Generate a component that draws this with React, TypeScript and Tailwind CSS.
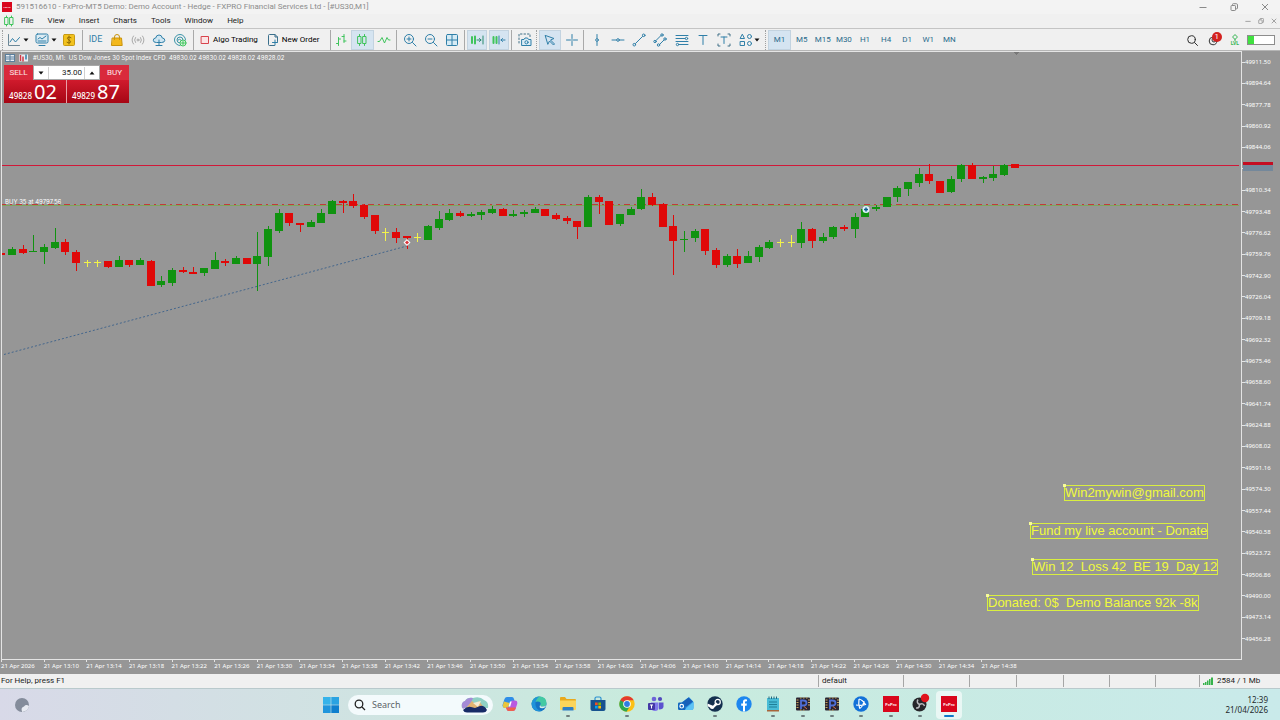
import { ReactNode } from 'react';
import { clsx } from 'clsx';

type Tone = 'g' | 'r' | 'y';
// tone, body top, body bottom, high, low
type Candle = [Tone, number, number, number, number];

const CANDLES: Candle[] = [
  ['r', 253, 255, 253, 255],
  ['g', 249, 255, 247, 255],
  ['r', 249, 253, 245, 254],
  ['g', 251, 252, 235, 252],
  ['g', 247, 252, 244, 264],
  ['g', 242, 248, 228, 249],
  ['r', 242, 252, 239, 255],
  ['r', 252, 263, 250, 271],
  ['y', 262, 263, 260, 267],
  ['y', 262, 263, 260, 267],
  ['r', 261, 267, 261, 268],
  ['g', 260, 267, 256, 267],
  ['r', 260, 265, 260, 267],
  ['g', 260, 265, 258, 265],
  ['r', 261, 286, 260, 286],
  ['g', 281, 285, 276, 287],
  ['g', 270, 283, 268, 286],
  ['r', 270, 272, 267, 273],
  ['r', 272, 274, 267, 274],
  ['g', 268, 273, 268, 276],
  ['g', 260, 269, 252, 269],
  ['r', 261, 263, 259, 266],
  ['g', 258, 264, 256, 264],
  ['r', 258, 264, 258, 264],
  ['g', 256, 264, 232, 291],
  ['g', 229, 257, 226, 266],
  ['g', 213, 231, 209, 233],
  ['r', 213, 223, 213, 226],
  ['r', 223, 225, 223, 232],
  ['g', 222, 227, 220, 227],
  ['g', 213, 223, 209, 223],
  ['g', 201, 214, 200, 214],
  ['r', 201, 203, 200, 213],
  ['r', 201, 206, 194, 208],
  ['r', 205, 217, 204, 219],
  ['r', 215, 231, 215, 234],
  ['y', 232, 233, 228, 241],
  ['r', 232, 238, 228, 243],
  ['r', 236, 238, 236, 249],
  ['y', 237, 238, 233, 242],
  ['g', 226, 240, 225, 240],
  ['g', 219, 228, 211, 230],
  ['g', 213, 220, 209, 221],
  ['r', 213, 216, 211, 217],
  ['g', 214, 216, 212, 217],
  ['g', 212, 215, 210, 220],
  ['g', 209, 213, 206, 214],
  ['r', 209, 216, 208, 216],
  ['g', 214, 216, 210, 217],
  ['g', 212, 214, 210, 217],
  ['g', 209, 213, 207, 213],
  ['r', 209, 216, 209, 216],
  ['r', 215, 219, 213, 220],
  ['r', 218, 221, 216, 224],
  ['r', 221, 227, 221, 239],
  ['g', 197, 227, 195, 227],
  ['r', 197, 202, 195, 214],
  ['r', 201, 225, 201, 225],
  ['g', 214, 224, 214, 226],
  ['g', 209, 215, 207, 215],
  ['g', 197, 209, 189, 210],
  ['r', 197, 205, 193, 206],
  ['r', 204, 227, 203, 227],
  ['r', 226, 241, 215, 275],
  ['g', 239, 240, 231, 252],
  ['g', 231, 238, 229, 242],
  ['r', 229, 251, 229, 255],
  ['r', 250, 265, 248, 268],
  ['g', 256, 265, 254, 267],
  ['r', 256, 264, 249, 268],
  ['g', 256, 263, 251, 263],
  ['g', 247, 257, 245, 262],
  ['g', 242, 248, 240, 249],
  ['y', 242, 243, 239, 247],
  ['y', 242, 243, 235, 247],
  ['g', 229, 243, 222, 248],
  ['r', 229, 241, 228, 248],
  ['g', 237, 241, 233, 243],
  ['g', 227, 237, 226, 239],
  ['r', 227, 229, 225, 231],
  ['g', 217, 229, 213, 238],
  ['g', 209, 217, 208, 217],
  ['g', 207, 209, 205, 211],
  ['g', 197, 207, 197, 207],
  ['g', 188, 197, 186, 202],
  ['g', 182, 189, 182, 196],
  ['g', 174, 183, 168, 187],
  ['r', 174, 181, 164, 184],
  ['r', 181, 193, 181, 193],
  ['g', 179, 192, 176, 193],
  ['g', 165, 179, 164, 182],
  ['r', 165, 179, 163, 179],
  ['g', 177, 179, 176, 183],
  ['g', 174, 178, 166, 181],
  ['g', 165, 175, 164, 176],
  ['r', 164, 168, 164, 168],
];

const TONES: Record<Tone, string> = { g: '#109310', r: '#e00808', y: '#f2f24a' };

const MENU = ['File', 'View', 'Insert', 'Charts', 'Tools', 'Window', 'Help'];
const TIMEFRAMES = ['M1', 'M5', 'M15', 'M30', 'H1', 'H4', 'D1', 'W1', 'MN'];

const PRICES = Array.from({ length: 28 }, (_, i) => (49911.5 - 16.86 * i).toFixed(2));

const TIMES = Array.from({ length: 24 }, (_, i) => {
  if (i === 0) return '21 Apr 2026';
  const m = 66 + 4 * i;
  return `21 Apr ${12 + Math.floor(m / 60)}:${String(m % 60).padStart(2, '0')}`;
});

const NOTES = [
  { text: 'Win2mywin@gmail.com', place: 'left-[1062px] top-[433px]' },
  { text: 'Fund my live account - Donate', place: 'left-[1028px] top-[471px]' },
  { text: 'Win 12  Loss 42  BE 19  Day 12', place: 'left-[1030px] top-[507px]' },
  { text: 'Donated: 0$  Demo Balance 92k -8k', place: 'left-[985px] top-[543px]' },
];

const BLUE = '#2f7fa8';
const GREEN = '#3fc45c';

function Icon({ children, color = BLUE }: { children: ReactNode; color?: string }) {
  return (
    <svg
      viewBox="0 0 14 14"
      className="size-3.5 shrink-0"
      fill="none"
      stroke={color}
      strokeWidth="1"
      strokeLinecap="round"
      strokeLinejoin="round"
    >
      {children}
    </svg>
  );
}

function Caret() {
  return (
    <svg viewBox="0 0 6 4" className="h-1 w-1.5 shrink-0">
      <path d="M.5.5h5L3 3.500Z" fill="#111" />
    </svg>
  );
}

function Tool({
  label,
  active,
  className,
  children,
}: {
  label: string;
  active?: boolean;
  className?: string;
  children: ReactNode;
}) {
  return (
    <button
      type="button"
      aria-label={label}
      className={clsx(
        'flex h-5 items-center justify-center',
        active && 'border border-[#c3d3e0] bg-[#d5e4f1]',
        className ?? 'min-w-0 flex-1'
      )}
    >
      {children}
    </button>
  );
}

function Group({
  className,
  dotted,
  children,
}: {
  className: string;
  dotted?: boolean;
  children: ReactNode;
}) {
  return (
    <div
      className={clsx(
        'flex h-5 shrink-0 items-center border-l',
        dotted ? 'border-dotted border-[#a0a0a0]' : 'border-[#a9a9a9]',
        className
      )}
    >
      {children}
    </div>
  );
}

function WindowButtons({ small }: { small?: boolean }) {
  return (
    <div className={clsx('flex items-center text-[#8a8a8a]', small ? 'w-[38px]' : 'w-[93px]')}>
      {['Minimize', 'Restore', 'Close'].map((name) => (
        <button
          key={name}
          type="button"
          aria-label={name}
          className="flex flex-1 items-center justify-center"
        >
          <svg
            viewBox="0 0 8 8"
            className={small ? 'size-1.5' : 'size-2'}
            fill="none"
            stroke="currentColor"
          >
            {name === 'Minimize' && <path d="M.5 4.500h7" />}
            {name === 'Restore' && (
              <path d="M1 3.200q0-.7.7-.7h3.100q.7 0 .7.700v3.600q0 .7-.7.700H1.700q-.7 0-.7-.7ZM2.500 2.500V1.500q0-.8.800-.8h3q1.200 0 1.200 1.200v3.100q0 .8-.8.800h-1" />
            )}
            {name === 'Close' && <path d="m1 1 6 6M7 1 1 7" />}
          </svg>
        </button>
      ))}
    </div>
  );
}

function FxArt() {
  return (
    <>
      <rect width="16" height="16" fill="#d9061c" />
      <text
        x="8"
        y="9.500"
        textAnchor="middle"
        fontSize="4"
        fontWeight="700"
        fontFamily="Liberation Sans, sans-serif"
        fill="#fff"
      >
        FxPro
      </text>
    </>
  );
}

function TitleBar() {
  return (
    <header className="flex h-3.5 items-center bg-[#f3f3f3] pl-0.5">
      <svg viewBox="0 0 16 16" className="size-2.5 shrink-0">
        <FxArt />
      </svg>
      <h1 className="flex-1 pl-1 text-[8px] leading-3 whitespace-nowrap text-[#8c8c8c]">
        591516610 - FxPro-MT5 Demo: Demo Account - Hedge - FXPRO Financial Services Ltd - [#US30,M1]
      </h1>
      <WindowButtons />
    </header>
  );
}

function MenuBar() {
  return (
    <nav className="flex h-[15px] items-center border-b border-[#c4c4c4] bg-[#f0f0f0] pl-0.5">
      <Icon color={GREEN}>
        <path d="M4.500 2v1.500M4.500 10.500V12M9.500 2v1.500M9.500 10.500V12M3 3.500h3v7H3ZM8 3.500h3v7H8Z" />
      </Icon>
      <div className="flex flex-1 items-center gap-[14px] pl-[5px]">
        {MENU.map((item) => (
          <button key={item} type="button" className="text-[8px] leading-3 text-[#1b1b1b]">
            {item}
          </button>
        ))}
      </div>
      <WindowButtons small />
    </nav>
  );
}

function Toolbar() {
  return (
    <div
      role="toolbar"
      aria-label="Standard"
      className="flex h-[21px] items-center bg-[#f0f0f0] pl-0.5 text-[8px]"
    >
      <Group dotted className="w-20 gap-[3px] pl-[5px]">
        <Tool label="Chart type" className="w-5 gap-0.5">
          <Icon color="#6d8796">
            <path d="M1.500 1.500v11h11" />
            <path d="m3 9 2.500-3.500L8.500 9l4-4.500" stroke={BLUE} />
          </Icon>
          <Caret />
        </Tool>
        <Tool label="Indicators" className="ml-1 w-[22px] gap-0.5">
          <Icon>
            <rect x="1" y="1" width="12" height="9" rx="1.500" fill="#dcebf3" />
            <path d="m3 6 2-1.500L7 6l4-3M3 8h8M4 12.500h6" />
          </Icon>
          <Caret />
        </Tool>
        <Tool label="Symbols" className="w-[18px]">
          <Icon color="#c79a13">
            <rect x="1.500" y="1.500" width="11" height="11" rx="1" fill="#f2c21e" />
            <path d="M9 4.700Q7 3.500 5.700 4.500T7 7t1.300 2.500T5 9.300M7 3v8" stroke="#8f6b06" />
          </Icon>
        </Tool>
      </Group>

      <Group className="w-[111px] px-0.5">
        <Tool label="MetaEditor IDE">
          <span className="text-[9px] text-[#2f7fa8]">IDE</span>
        </Tool>
        <Tool label="Market">
          <Icon color="#c9930d">
            <path d="M2.500 5h9l.7 7.500H1.800Z" fill="#f3b81c" />
            <path d="M4.500 6.500V4Q4.500 1.500 7 1.500T9.500 4v2.500" />
          </Icon>
        </Tool>
        <Tool label="Signals">
          <Icon color="#a9a9a9">
            <circle cx="7" cy="7" r="1" />
            <path d="M4.500 4.500q-2 2.500 0 5M9.500 4.500q2 2.500 0 5M2.500 3Q-.5 7 2.500 11M11.500 3q3 4 0 8" />
          </Icon>
        </Tool>
        <Tool label="Virtual hosting">
          <Icon>
            <path
              d="M4 9.500Q1.300 9.500 1.300 7.300T3.700 5Q4.200 2 7 2t3.300 3q2.500.2 2.500 2.300T10 9.500Z"
              fill="#cfe6f2"
            />
            <path d="M7 7v5.500M4 12.500h6" />
          </Icon>
        </Tool>
        <Tool label="Community">
          <Icon color="#3a93a8">
            <path d="M7 12.500A5.500 5.500 0 1 1 12.500 7M7 10A3 3 0 1 1 10 7M5 7a2 2 0 0 1 3 0" />
            <circle cx="10" cy="10" r="3" fill="#dff5e2" stroke={GREEN} />
            <path d="M8.500 10h3M10 8.500v3" stroke={GREEN} />
          </Icon>
        </Tool>
      </Group>

      <Group className="w-[137px] gap-2 pl-1">
        <Tool label="Algo Trading" className="shrink-0 gap-px whitespace-nowrap">
          <Icon color="#d8434c">
            <rect x="3.500" y="3.500" width="7" height="7" fill="#fbe4e5" />
          </Icon>
          Algo Trading
        </Tool>
        <Tool label="New Order" className="shrink-0 gap-0.5 whitespace-nowrap">
          <Icon color="#3a6f8c">
            <path d="M8.500 12.500H3.500Q2.500 12.500 2.500 11.500v-9Q2.500 1.500 3.500 1.500H9L11.500 4v4.500M9 1.500V4h2.500" />
            <path d="M6.500 9.500h5M9 7v5" stroke={BLUE} />
          </Icon>
          New Order
        </Tool>
      </Group>

      <Group className="w-[66px] pr-0.5">
        <Tool label="Bar chart">
          <Icon color={GREEN}>
            <path d="M4.500 4.500v8M4.500 10.500h-2M4.500 6h2M10 1.500v8M10 3.500H8M10 8h2" />
          </Icon>
        </Tool>
        <Tool label="Candlesticks" active>
          <Icon color={GREEN}>
            <path d="M4.500 1.500v2M4.500 10.500v2M9.500 1.500v2M9.500 10.500v2M3 3.500h3v7H3ZM8 3.500h3v7H8Z" />
          </Icon>
        </Tool>
        <Tool label="Line chart">
          <Icon color={GREEN}>
            <path d="M1 8.500h1.500L5 4.500l2.500 5.500 2.500-5.500L11.500 7H13" />
          </Icon>
        </Tool>
      </Group>

      <Group className="w-[68px] px-0.5">
        <Tool label="Zoom in">
          <Icon>
            <circle cx="6" cy="6" r="4.500" />
            <path d="m9.500 9.500 3.500 3.500M4 6h4M6 4v4" />
          </Icon>
        </Tool>
        <Tool label="Zoom out">
          <Icon>
            <circle cx="6" cy="6" r="4.500" />
            <path d="m9.500 9.500 3.500 3.500M4 6h4" />
          </Icon>
        </Tool>
        <Tool label="Tile windows">
          <Icon>
            <rect x="1.500" y="1.500" width="11" height="11" rx="1" fill="#d6ebf5" />
            <path d="M7 1.500v11M1.500 7h11" />
          </Icon>
        </Tool>
      </Group>

      <Group className="w-[47px] gap-0.5 px-0.5">
        <Tool label="Auto scroll" active>
          <Icon color={GREEN}>
            <path d="M2 4v6M5 3.500v7" strokeWidth="2" />
            <path d="M7 7h4M9.500 5.500 11 7 9.500 8.500M13 3v8" stroke="#2b8a6e" />
          </Icon>
        </Tool>
        <Tool label="Chart shift" active>
          <Icon color={GREEN}>
            <path d="M1.500 4v6M4.500 4v6" strokeWidth="2" />
            <path d="M7 3v8M13 7H9M10.500 5.500 9 7l1.500 1.500" stroke={BLUE} />
          </Icon>
        </Tool>
      </Group>

      <Group className="w-[25px] pl-0.5">
        <Tool label="Screenshot">
          <Icon>
            <path d="M1 10V1h11v3" strokeDasharray="1.500 2" stroke="#3f6f86" />
            <path d="M4 6.500h2l1-1.500h2.500l1 1.500h2.500v6H4Z" fill="#dcecf5" />
            <circle cx="8.500" cy="9.300" r="1.600" />
          </Icon>
        </Tool>
      </Group>

      <Group dotted className="w-[47px] gap-px pr-px pl-0.5">
        <Tool label="Cursor" active>
          <Icon>
            <path d="m2.500 2.500 8.500 3-3.500 1.500 4 4-1 1-4-4L5 11Z" />
          </Icon>
        </Tool>
        <Tool label="Crosshair">
          <Icon>
            <path d="M7 1.500v4M7 8.500v4M1.500 7h4M8.500 7h4M7 6.500v1" />
          </Icon>
        </Tool>
      </Group>

      <Group className="w-[182px] pl-0.5">
        <Tool label="Vertical line">
          <Icon>
            <path d="M7 1.500v4M7 8.500v4" />
            <circle cx="7" cy="7" r="1.300" />
          </Icon>
        </Tool>
        <Tool label="Horizontal line">
          <Icon>
            <path d="M1 7h4.500M8.500 7H13" />
            <circle cx="7" cy="7" r="1.300" />
          </Icon>
        </Tool>
        <Tool label="Trendline">
          <Icon>
            <path d="m3.500 10.500 7-7" />
            <circle cx="2.300" cy="11.700" r="1.300" />
            <circle cx="11.700" cy="2.300" r="1.300" />
          </Icon>
        </Tool>
        <Tool label="Channel">
          <Icon>
            <path d="m3 7.500 5-5M6.500 11.500l4.500-4.500" />
            <circle cx="2" cy="8.500" r="1.200" />
            <circle cx="9" cy="2" r="1.200" />
            <circle cx="5.500" cy="12" r="1.200" />
            <circle cx="12" cy="6" r="1.200" />
          </Icon>
        </Tool>
        <Tool label="Fibonacci">
          <Icon>
            <path d="M1 2.500h12M1 5.500h9M1 8.500h12M4 11.500h9" />
            <circle cx="11.500" cy="5.500" r="1.200" />
            <circle cx="2.500" cy="11.500" r="1.200" />
          </Icon>
        </Tool>
        <Tool label="Text">
          <Icon>
            <path d="M3 2.500h8M7 2.500v9" />
          </Icon>
        </Tool>
        <Tool label="Text label">
          <Icon>
            <path d="M4 4h6M7 4v6.500" />
            <path d="M1 3V1h2M11 1h2v2M13 11v2h-2M3 13H1v-2" stroke="#3f6f86" />
          </Icon>
        </Tool>
        <Tool label="Objects" className="w-[30px] gap-px">
          <Icon>
            <path d="m3.500 1.500 2 4h-4Z" />
            <circle cx="10.500" cy="3.500" r="2" />
            <rect x="1.500" y="8.500" width="4" height="4" />
            <circle cx="10.500" cy="10.500" r="2" />
          </Icon>
          <Caret />
        </Tool>
      </Group>

      <Group dotted className="w-[195px] pl-0.5 text-[#2a6b8c]">
        {TIMEFRAMES.map((frame) => (
          <Tool key={frame} label={frame} active={frame === 'M1'}>
            {frame}
          </Tool>
        ))}
      </Group>

      <div className="flex flex-1 items-center justify-end gap-2 pr-[5px]">
        <Tool label="Search" className="w-3.5">
          <Icon color="#2d2d2d">
            <circle cx="6.500" cy="6.500" r="3.800" />
            <path d="m9.500 9.500 3 3" />
          </Icon>
        </Tool>
        <button
          type="button"
          aria-label="Notifications"
          className="relative flex h-5 w-4 items-center"
        >
          <Icon color="#333">
            <circle cx="6" cy="8" r="3.800" />
            <circle cx="7" cy="7" r="2" />
          </Icon>
          <span className="absolute top-0.5 left-[5px] flex size-[10px] items-center justify-center rounded-full bg-[#d3211f] text-[8px] text-white">
            1
          </span>
        </button>
        <button
          type="button"
          className="flex flex-col items-center text-[5px] leading-[5px] font-bold text-[#35b552]"
        >
          <svg viewBox="0 0 8 7" className="h-[7px] w-2" fill="none" stroke="currentColor">
            <path d="M4 .6 6.500 3 4 5.400 1.500 3ZM4 5v2" />
          </svg>
          LVL
        </button>
        <div className="flex h-2.5 w-7 border border-[#8d8d8d] bg-white">
          <div className="w-1.5 bg-[#3fe03f]" />
        </div>
      </div>
    </div>
  );
}

function TradePanel() {
  return (
    <div className="absolute top-[13px] left-0.5 w-[125px]">
      <div className="flex h-[15px] text-[8px]">
        <button type="button" className="w-[29px] bg-[#d92a3c] text-white/90">
          SELL
        </button>
        <div className="flex flex-1 items-center justify-between border border-[#a8a8a8] bg-white">
          <button type="button" aria-label="Decrease volume" className="px-1">
            <Caret />
          </button>
          <input
            aria-label="Volume"
            defaultValue="35.00"
            className="h-3 w-0 min-w-0 flex-1 border-x border-[#d0d0d0] pr-0.5 text-right text-[#222]"
          />
          <button type="button" aria-label="Increase volume" className="rotate-180 px-1">
            <Caret />
          </button>
        </div>
        <button type="button" className="w-[29px] bg-[#d92a3c] text-white/90">
          BUY
        </button>
      </div>
      <div className="flex h-[23px] gap-px bg-[#e9a0a7] font-['Noto_Sans',sans-serif]">
        {[
          ['49828', '02'],
          ['49829', '87'],
        ].map(([base, pips]) => (
          <button
            key={base}
            type="button"
            className="flex flex-1 items-baseline justify-center gap-0.5 bg-linear-to-b from-[#d01a2c] to-[#a60614] pr-1 text-white"
          >
            <span className="text-[8px] font-medium">{base}</span>
            <span className="text-[20px] leading-[23px]">{pips}</span>
          </button>
        ))}
      </div>
    </div>
  );
}

function Plot() {
  return (
    <svg className="absolute inset-0 size-full" shapeRendering="crispEdges">
      <g transform="translate(-2 -52)" strokeWidth="1">
        <path d="M1013 52h7l-3.500 3Z" fill="#777" />
        <line x1="0" x2="100%" y1="165.500" y2="165.500" stroke="#d01838" />
        <line x1="0" x2="100%" y1="205.500" y2="205.500" stroke="#7fa65c" />
        <line x1="0" x2="100%" y1="204.500" y2="204.500" stroke="#c23a3a" strokeDasharray="6 4 2 4" />
        <line
          x1="4"
          y1="354.500"
          x2="407"
          y2="246"
          stroke="#44668c"
          strokeDasharray="2 2"
          shapeRendering="auto"
        />
        {CANDLES.map(([tone, top, bottom, high, low], i) => {
          const x = Math.round(1.2 + 10.667 * i);
          return (
            <g key={i} fill={TONES[tone]} stroke="none">
              <rect x={x} y={high} width="1" height={low - high} />
              <rect
                x={x - (tone === 'y' ? 3 : 4)}
                y={top}
                width={tone === 'y' ? 7 : 8}
                height={bottom - top}
              />
            </g>
          );
        })}
        <g shapeRendering="auto">
          <path d="m407 239 3.500 3.500-3.500 3.500-3.500-3.500Z" fill="#fff" />
          <path d="m407 240.500 2 2-2 2-2-2Z" fill="#d8343a" />
          <circle cx="866" cy="209.500" r="3.500" fill="#dff3fb" />
          <path d="M864 209.500h4M866 207.500v4" stroke="#0f5f8c" strokeWidth="1.500" />
        </g>
      </g>
    </svg>
  );
}

function Chart() {
  return (
    <main className="flex flex-1 flex-col border-t border-[#b5b5b5] bg-[#969696] text-white">
      <div className="flex flex-1">
        <section className="relative ml-px flex-1 overflow-hidden border border-[#e4e4e4]">
          <Plot />
          <div className="absolute top-px left-[3px] flex items-center gap-1 font-[Inter,sans-serif] text-[6px] leading-[10px] whitespace-pre">
            <svg viewBox="0 0 24 8" className="h-2 w-6">
              <rect x=".500" y=".500" width="9" height="7" fill="#e8eef4" stroke="#5b7f9c" />
              <path d="M1 3h8M1 5h8M5 1v6" stroke="#5b7f9c" />
              <rect x="14" y=".500" width="9" height="7" fill="#e8eef4" />
              <path d="M15.500 1v6M18 2.500v5" stroke="#d13a45" strokeWidth="1.500" />
              <path d="M21 .500v5" stroke="#2f7fa8" strokeWidth="1.500" />
            </svg>
            <span>
              #US30, M1:  US Dow Jones 30 Spot Index CFD  49830.02 49830.02 49828.02 49828.02
            </span>
          </div>
          <TradePanel />
          <span className="absolute top-[145px] left-[3px] font-[Inter,sans-serif] text-[6px] leading-[10px]">
            BUY 35 at 49797.56
          </span>
          {NOTES.map(({ text, place }) => (
            <div
              key={text}
              className={clsx(
                'absolute border border-[#d9ee3f] font-[Liberation_Sans,Arial,sans-serif] text-[13px] leading-[14px] whitespace-pre text-[#f0fa3c]',
                place
              )}
            >
              <i className="absolute -top-0.5 -left-0.5 size-[3px] bg-[#f6fb9a]" />
              {text}
            </div>
          ))}
        </section>
        <aside className="relative flex w-[38px] flex-col justify-between pt-1.5 pb-4 font-['Noto_Sans',sans-serif] text-[6px] leading-[10px]">
          {PRICES.map((price) => (
            <span key={price} className="flex items-center">
              <i className="h-px w-[3px] bg-[#e4e4e4]" />
              {price}
            </span>
          ))}
          <div className="absolute top-[111px] left-px h-[9px] w-[30px] border-t-[3px] border-[#c40d22] bg-[#74889b]" />
        </aside>
      </div>
      <ol className="grid h-[14px] w-[1024px] grid-cols-24 pl-px font-['Noto_Sans',sans-serif] text-[6px] leading-[12px] whitespace-nowrap">
        {TIMES.map((time) => (
          <li key={time} className="relative">
            <i className="absolute -top-px left-0 h-[3px] w-px bg-[#e4e4e4]" />
            {time}
          </li>
        ))}
      </ol>
    </main>
  );
}

function StatusBar() {
  const cell = 'border-l border-[#a6a6a6]';
  return (
    <footer className="flex h-3.5 items-stretch bg-[#f0f0f0] py-px text-[8px] leading-3 text-[#1b1b1b]">
      <span className="flex-1 pl-px">For Help, press F1</span>
      <span className={clsx(cell, 'w-[85px] pl-[3px]')}>default</span>
      <span className={clsx(cell, 'w-[66px]')} />
      <span className={clsx(cell, 'w-[47px]')} />
      <span className={clsx(cell, 'w-[47px]')} />
      <span className={clsx(cell, 'w-[46px]')} />
      <span className={clsx(cell, 'w-[46px]')} />
      <span className={clsx(cell, 'w-[44px]')} />
      <span className={clsx(cell, 'flex w-[81px] items-center gap-1 pl-[3px]')}>
        <svg viewBox="0 0 10 8" className="h-2 w-2.5" fill="#36b24a">
          <path d="M0 6h1.500v2H0ZM2 5h1.500v3H2ZM4 3.500h1.500V8H4ZM6 2h1.500v6H6ZM8 .500h2V8H8Z" />
        </svg>
        2584 / 1 Mb
      </span>
    </footer>
  );
}

const Pcb = () => (
  <>
    <rect x="1" y="1.500" width="14" height="13" rx="1" fill="#2a2430" />
    <path
      d="M1.500 4h2M1.500 6.500h2M1.500 9h2M1.500 11.500h2M13 4h2M13 6.500h2M13 9h2M5 2h1.500M8 2h1.500M11 2h1.500M5 14h1.500M8 14h1.500"
      stroke="#c9a45f"
    />
    <path d="M6 13V4.500h2.500q3 0 3 2.500T8.500 9.500H6" fill="none" stroke="#4f6fd6" strokeWidth="1.800" />
    <path d="m9 10.500 3 2.500" stroke="#d0704a" />
  </>
);

const APPS: { name: string; running?: boolean; active?: boolean; art: ReactNode }[] = [
  {
    name: 'Copilot',
    art: (
      <>
        <path d="M5 1h5q1.500 0 2 2l.7 2.500H9.500L7 12H3Q-.2 12 .7 8.500L2.500 3Q3.200 1 5 1Z" fill="#2f8ee8" />
        <path d="M2 5.500 1 8.500q-.6 3.500 2 3.500h3l1.500-5Z" fill="#e9c53c" />
        <path d="M11 15H6.500q-1.500 0-2-2L4 11.500h3L9.500 4.500H13q3 0 2.200 3.500l-1.700 5q-.7 2-2.500 2Z" fill="#b95ae0" />
        <path d="M11 15H6.500q-1.500 0-2-2L4 11.500h10l-.5 1.500q-.7 2-2.500 2Z" fill="#f0604c" />
        <path d="m8 5.500-1.500 5h1.700l1.500-5Z" fill="#fff" />
      </>
    ),
  },
  {
    name: 'Edge',
    art: (
      <>
        <circle cx="8" cy="8" r="7.500" fill="#1473c4" />
        <path d="M.6 8Q1.500.5 8.500.5T15.500 7q0 3.500-4 3.500-3 0-2-2 .8-3-3-3T.6 8Z" fill="#43c9a3" />
        <path d="M.6 7Q2.500 1 8 .7 4 4 4.500 9T11 15Q.5 16.500.6 7Z" fill="#1f93da" />
        <path d="M9.500 8.500q-1 2 2 2 2.500 0 3.800-1.300-1 3-4 3Q7 12 9.500 8.500Z" fill="#d5eee6" />
      </>
    ),
  },
  {
    name: 'File Explorer',
    running: true,
    art: (
      <>
        <path d="M0 2q0-1 1-1h4l1.500 2H15q1 0 1 1v9H0Z" fill="#e9a91d" />
        <path d="M0 4.500h16V13q0 1-1 1H1q-1 0-1-1Z" fill="#fbd55b" />
        <path d="M2.500 14.500V12q0-1 1-1h9q1 0 1 1v2.500Z" fill="#2f7fc4" />
      </>
    ),
  },
  {
    name: 'Microsoft Store',
    art: (
      <>
        <path d="M5 5V2.500Q5 1 6.500 1h3Q11 1 11 2.500V5" fill="none" stroke="#2a8fd0" strokeWidth="1.200" />
        <path d="M.500 4h15v9q0 2-2 2h-11q-2 0-2-2Z" fill="#17528f" />
        <path d="M5 6.500h2.700v2.700H5Z" fill="#f25022" />
        <path d="M8.300 6.500H11v2.700H8.300Z" fill="#7fba00" />
        <path d="M5 9.800h2.700v2.700H5Z" fill="#00a4ef" />
        <path d="M8.300 9.800H11v2.700H8.300Z" fill="#ffb900" />
      </>
    ),
  },
  {
    name: 'Chrome',
    running: true,
    art: (
      <>
        <circle cx="8" cy="8" r="7.700" fill="#fbc116" />
        <path d="M8 4.200h6.700A7.700 7.700 0 0 0 1.300 4.200L4.700 9.800Z" fill="#e33b2e" />
        <path d="M1.300 4.200A7.700 7.700 0 0 0 7.500 15.700L11 10 8 8Z" fill="#2da94f" />
        <circle cx="8" cy="8" r="3.800" fill="#fff" />
        <circle cx="8" cy="8" r="2.900" fill="#2f7de1" />
      </>
    ),
  },
  {
    name: 'Teams',
    art: (
      <>
        <circle cx="6" cy="3" r="2.300" fill="#6d63d8" />
        <circle cx="12" cy="3" r="2.100" fill="#5148bd" />
        <path d="M3 6.500h7.500v5Q10.500 15 7 15t-4-3.500Z" fill="#8078ea" />
        <path d="M11 6.500h4.500v4q0 3-4.500 3Z" fill="#5c52cf" />
        <rect y="7" width="7" height="7" rx="1" fill="#4438a6" />
        <path d="M2 9h3M3.500 9v3.500" stroke="#fff" />
      </>
    ),
  },
  {
    name: 'Outlook',
    art: (
      <>
        <path d="M3 7 11 1l4.500 5v6q0 2-2 2H5Z" fill="#2f9be8" />
        <path d="M4 6.500 10.500 1.500 15 5.500 8 11Z" fill="#175fb8" />
        <path d="M15.500 6v6q0 2-2 2H6Z" fill="#5cc2f5" />
        <rect y="6.500" width="7.500" height="7.500" rx="1.200" fill="#1266bf" />
        <circle cx="3.700" cy="10.200" r="1.800" fill="none" stroke="#fff" strokeWidth="1.200" />
      </>
    ),
  },
  {
    name: 'Steam',
    running: true,
    art: (
      <>
        <circle cx="8" cy="8" r="7.700" fill="#15304f" />
        <path d="M.4 7.500 6 9.800l3-3.500 2 2-3.500 3q-.5 2-2.500 1.800T3 11.500L.6 10.300Z" fill="#fff" />
        <circle cx="10.700" cy="6" r="2.600" fill="none" stroke="#fff" strokeWidth="1.200" />
      </>
    ),
  },
  {
    name: 'Facebook',
    art: (
      <>
        <circle cx="8" cy="8" r="7.700" fill="#1d86ef" />
        <path d="M7 15.500V9.800H5.200V7.600H7V6q0-2.700 2.600-2.700l1.400.1v1.900h-1q-1 0-1 1v1.300h1.900l-.3 2.200H9v5.700Z" fill="#fff" />
      </>
    ),
  },
  {
    name: 'Notepad',
    running: true,
    art: (
      <>
        <path d="M2 2h12v12H2Z" fill="#49bcd6" />
        <path d="M2 14h12v1.500H2Z" fill="#a8643a" />
        <path d="M4 .500v2.500M6.500.500v2.500M9 .500v2.500M11.500.500v2.500" stroke="#23697e" />
        <path d="M4 6h8M4 8.500h8M4 11h8" stroke="#1f7f98" />
      </>
    ),
  },
  { name: 'Chip tool', running: true, art: <Pcb /> },
  { name: 'Chip tool 2', running: true, art: <Pcb /> },
  {
    name: 'Battle.net',
    running: true,
    art: (
      <>
        <circle cx="8" cy="8" r="7.700" fill="#1271d8" />
        <path
          d="M6 3q-.8 5 .7 9.500M6 3q3.500.7 6.500 5.500-4 1.500-9.500.5M6.700 12.500Q10 10.500 11 5"
          fill="none"
          stroke="#fff"
          strokeWidth="1.200"
        />
      </>
    ),
  },
  { name: 'FxPro', running: true, art: <FxArt /> },
  {
    name: 'OBS Studio',
    running: true,
    art: (
      <>
        <circle cx="7.500" cy="8.500" r="7" fill="#26262a" />
        <path
          d="M7.500 8.500Q4 6.500 6 3.500M7.500 8.500q0 4-3.500 3.500M7.500 8.500q3.500-2 5 1.500"
          fill="none"
          stroke="#b9b9bd"
          strokeWidth="1.500"
        />
        <circle cx="13" cy="2" r="4.200" fill="#e0131c" />
      </>
    ),
  },
  { name: 'FxPro MT5', running: true, active: true, art: <FxArt /> },
];

function Taskbar() {
  return (
    <nav
      aria-label="Taskbar"
      className="grid h-8 grid-cols-[1fr_auto_1fr] items-center border-t border-[#b9c9cc] bg-linear-to-r from-[#d8d9e8] via-[#c8ebdd] to-[#c9eaea]"
    >
      <button type="button" aria-label="Widgets" className="ml-3.5 w-4">
        <svg viewBox="0 0 16 16" className="size-4">
          <circle cx="8" cy="8" r="7" fill="#848c9b" />
          <path d="M8 14.500q-1.500-4 2-5 2-2.500 5-.5Q14.500 14 8 15Z" fill="#e8ebf2" />
        </svg>
      </button>
      <div className="flex items-center gap-0.5">
        <button type="button" aria-label="Start" className="flex w-[30px] justify-center">
          <svg viewBox="0 0 16 16" className="size-4">
            <path d="M0 0h7.700v7.700H0Z" fill="#35b3ea" />
            <path d="M8.300 0H16v7.700H8.300Z" fill="#2aa3e2" />
            <path d="M0 8.300h7.700V16H0Z" fill="#1f95dc" />
            <path d="M8.300 8.300H16V16H8.300Z" fill="#0f7fce" />
          </svg>
        </button>
        <label className="flex h-5 w-[145px] items-center gap-1.5 rounded-full bg-[#f3fafc] pr-1 pl-1.5">
          <svg viewBox="0 0 12 12" className="size-3 shrink-0" fill="none" stroke="#222" strokeWidth="1.300">
            <circle cx="5" cy="5" r="3.800" />
            <path d="m8 8 3 3" />
          </svg>
          <input
            type="text"
            aria-label="Search"
            placeholder="Search"
            className="w-0 min-w-0 flex-1 font-['Noto_Sans',sans-serif] text-[9px] leading-4 placeholder:text-[#5c6468]"
          />
          <svg viewBox="0 0 28 16" className="h-4 w-7 shrink-0">
            <path d="M1 11Q-.5 6 4 4 6 0 12 1q7-2 11 2 5 2 4 8Z" fill="#8fd0c4" />
            <path d="M1 10Q0 5 4 4 7 0 12 1L9 8l-7 4Z" fill="#a58bd6" />
            <path d="m5 11 6-7 4 4 3-4 6 8Z" fill="#e0b271" />
            <path d="m12 6 5 4 3-6Z" fill="#f3ead3" />
            <path d="M2 13q4-4 8-3l4 1 5-2q4-1 7 4-1 2.500-4 2.500H6q-3 0-4-2.500Z" fill="#172a66" />
          </svg>
        </label>
        <ul className="grid w-[469px] grid-cols-16">
          {APPS.map(({ name, running, active, art }) => (
            <li key={name} className="flex justify-center">
              <button
                type="button"
                aria-label={name}
                className={clsx(
                  'flex h-7 w-[26px] flex-col items-center pt-[5px]',
                  active && 'rounded-sm bg-white/60'
                )}
              >
                <svg viewBox="0 0 16 16" className="size-4 overflow-visible">
                  {art}
                </svg>
                {running && (
                  <i
                    className={clsx(
                      'mt-[3px] h-0.5 rounded-full',
                      active ? 'w-2.5 bg-[#0f78c8]' : 'w-1 bg-[#6f7f80]'
                    )}
                  />
                )}
              </button>
            </li>
          ))}
        </ul>
      </div>
      <div className="pr-3 text-right font-['Noto_Sans',sans-serif] text-[8px] leading-[10px] text-[#1f2a2c]">
        <p>12:39</p>
        <p>21/04/2026</p>
      </div>
    </nav>
  );
}

export default function App() {
  return (
    <div className="flex min-h-screen flex-col overflow-hidden bg-[#f0f0f0] font-[Roboto,'Open_Sans',sans-serif]">
      <TitleBar />
      <MenuBar />
      <Toolbar />
      <Chart />
      <StatusBar />
      <Taskbar />
    </div>
  );
}
